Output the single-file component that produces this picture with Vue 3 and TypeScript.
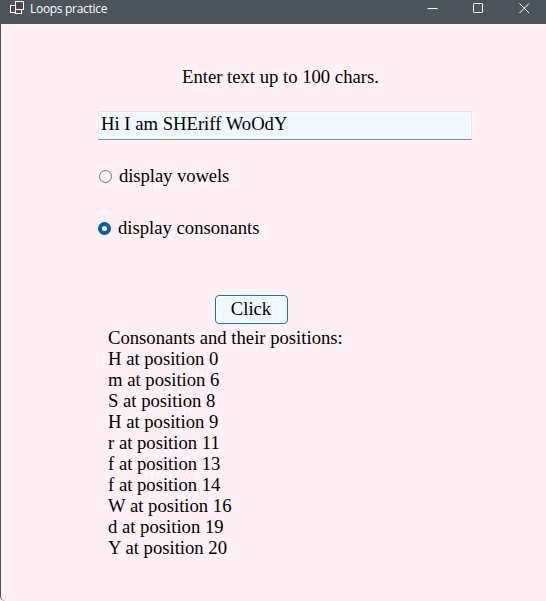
<script setup lang="ts">
import { computed, ref } from 'vue'

type Mode = 'vowels' | 'consonants'

interface Result {
  title: string
  lines: string[]
}

const text = ref<string>('Hi I am SHEriff WoOdY')
const mode = ref<Mode>('consonants')

function scan(source: string, kind: Mode): Result {
  const lines: string[] = []
  for (let i = 0; i < source.length; i++) {
    const ch = source[i]
    if (!/[a-z]/i.test(ch)) continue
    const isVowel = /[aeiou]/i.test(ch)
    if (isVowel === (kind === 'vowels')) lines.push(`${ch} at position ${i}`)
  }
  const title = kind === 'vowels' ? 'Vowels and their positions:' : 'Consonants and their positions:'
  return { title, lines }
}

const result = ref<Result>(scan(text.value, mode.value))
const rows = computed<string[]>(() => [result.value.title, ...result.value.lines])

function run(): void {
  result.value = scan(text.value, mode.value)
}
</script>

<template>
  <div class="window">
    <header class="titlebar">
      <svg class="app-icon" width="16" height="16" viewBox="0 0 16 16" fill="#4a4a4b" stroke="#fff">
        <rect x="1.5" y="5.5" width="6" height="7" />
        <rect x="6.5" y="8.5" width="6" height="5" />
        <rect x="6.5" y="1.5" width="8" height="8" />
      </svg>
      <span class="caption">Loops practice</span>
      <div class="controls">
        <svg width="11" height="11" viewBox="0 0 11 11" stroke="#fff" fill="none"><path d="M0.5 5.5H10.5" /></svg>
        <svg width="11" height="11" viewBox="0 0 11 11" stroke="#fff" fill="none"><rect x="0.5" y="0.5" width="9" height="9" rx="0.7" /></svg>
        <svg width="11" height="11" viewBox="0 0 11 11" stroke="#fff" fill="none"><path d="M0.5 0.5L10 10M10 0.5L0.5 10" /></svg>
      </div>
    </header>
    <main class="client">
      <label class="prompt" for="entry">Enter text up to 100 chars.</label>
      <input id="entry" v-model="text" class="entry" type="text" maxlength="100" spellcheck="false" />
      <label class="option">
        <input v-model="mode" type="radio" name="mode" value="vowels" />
        <span class="option-text tight">display vowels</span>
      </label>
      <label class="option second">
        <input v-model="mode" type="radio" name="mode" value="consonants" />
        <span class="option-text">display consonants</span>
      </label>
      <button class="run" type="button" @click="run">Click</button>
      <div class="output">
        <div v-for="(row, i) in rows" :key="i" class="row">{{ row }}</div>
      </div>
    </main>
  </div>
</template>

<style>
body {
  background: #fff0f5;
}
</style>

<style scoped>
.window {
  box-sizing: border-box;
  height: 601px;
  overflow: hidden;
  border-left: 1px solid #4c555a;
  border-bottom-left-radius: 5px;
  background: #fff0f5;
  color: #000;
  font-family: "Liberation Serif", "Times New Roman", serif;
  font-size: 18.667px;
  line-height: 19px;
}
.titlebar {
  display: flex;
  height: 24px;
  margin-left: -1px;
  padding-left: 9px;
  background: #4c555a;
  color: #fff;
}
.app-icon {
  flex: none;
}
.caption {
  margin-left: 5px;
  font: 12px/18px "Open Sans", "Noto Sans", sans-serif;
  letter-spacing: -0.3px;
}
.controls {
  display: flex;
  gap: 35px;
  margin-left: auto;
  padding: 3px 16px 0 0;
}
.client {
  display: flex;
  flex-direction: column;
  align-items: flex-start;
  padding: 43px 74px 0 97px;
}
.prompt {
  height: 21px;
  margin-left: 84px;
}
.entry {
  box-sizing: border-box;
  width: 374px;
  height: 29px;
  margin-top: 23px;
  padding: 0 2px 3px;
  border: 1px solid #e6e6e6;
  border-bottom-color: #868686;
  border-radius: 0;
  outline: none;
  background: #f0f8ff;
  box-shadow: inset 0 0 0 1px #f6fbff;
  color: #000;
  font: inherit;
}
.option {
  display: flex;
  align-items: center;
  gap: 7px;
  height: 21px;
  margin: 26px 0 0 1px;
}
.option-text {
  height: 21px;
}
.tight {
  letter-spacing: -0.08px;
}
.option input {
  appearance: none;
  box-sizing: border-box;
  width: 13px;
  height: 13px;
  margin: 0;
  border: 1px solid #767676;
  border-radius: 50%;
  background: #f3f3f3;
}
.option input:checked {
  border: 4px solid #005fb8;
  background: #fff;
}
.second {
  margin: 31px 0 0;
}
.run {
  box-sizing: border-box;
  width: 73px;
  height: 29px;
  margin: 56px 0 0 117px;
  padding: 0 1px 2px 0;
  border: 1px solid #0078d4;
  border-radius: 4px;
  background: #f0f8ff;
  box-shadow: inset 0 0 0 1px #fff;
  color: #000;
  font: inherit;
}
.output {
  margin: 4px 0 0 10px;
}
.row {
  height: 21px;
  white-space: pre;
}
</style>
